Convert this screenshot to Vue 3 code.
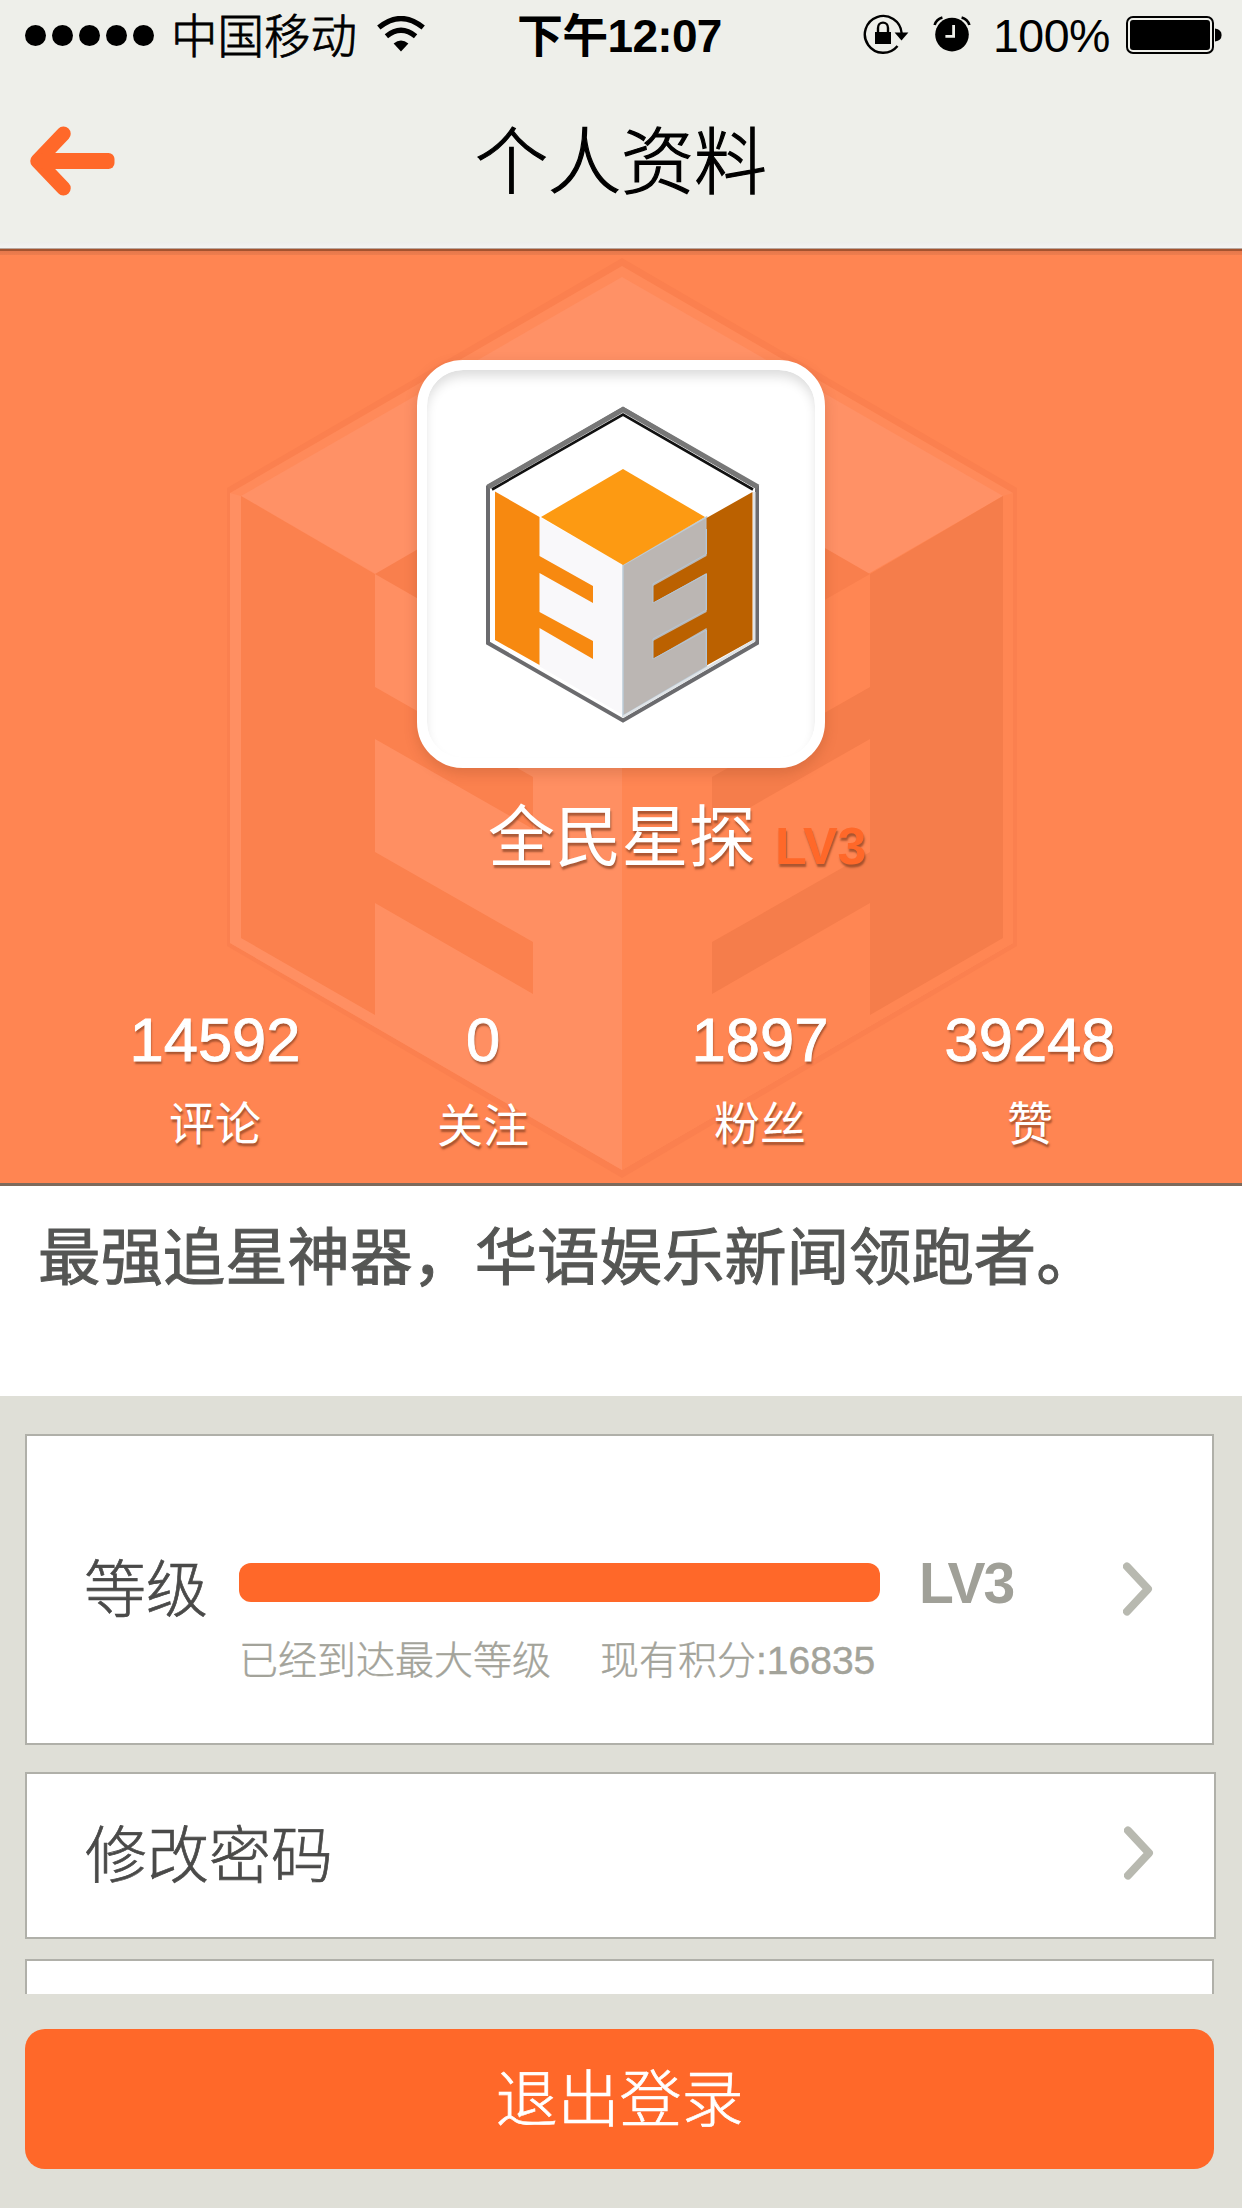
<script setup>
const stats = [
  { value: '14592', label: '评论' },
  { value: '0', label: '关注', low: true },
  { value: '1897', label: '粉丝' },
  { value: '39248', label: '赞' },
]
const level = { name: 'LV3', percent: 100, points: 16835 }
</script>

<template>
  <div class="page">
    <div class="status">
      <div class="dots"><i v-for="n in 5" :key="n"></i></div>
      <span class="carrier">中国移动</span>
      <svg class="wifi" width="48" height="36" viewBox="0 0 48 36">
        <g fill="none" stroke="#000" stroke-width="5.2">
          <path d="M1.8 11.6Q24-6.6 46.2 11.6" />
          <path d="M9.4 20.2Q24 8.2 38.6 20.2" />
        </g>
        <path d="M16.6 27.4Q24 21.6 31.4 27.4L24 35.4Z" />
      </svg>
      <span class="time">下午12:07</span>
      <svg class="lock" width="46" height="40" viewBox="0 0 46 40">
        <path d="M34.5 32A18.4 18.4 0 1 1 38.6 19" fill="none" stroke="#000" stroke-width="2.4" />
        <path d="M31.6 18.6H45.4L38.5 26.4Z" />
        <rect x="12" y="18" width="16" height="12" />
        <path d="M15 18V14a5 5.4 0 0 1 10 0v4" fill="none" stroke="#000" stroke-width="2.4" />
      </svg>
      <svg class="alarm" width="38" height="36" viewBox="0 0 38 36">
        <circle cx="19" cy="18.6" r="16.8" />
        <path d="M1.6 9Q3.4 3 9.4 1.4M28.6 1.4Q34.6 3 36.4 9" fill="none" stroke="#000" stroke-width="2.6" />
        <path d="M20.6 9V20.4H12.4" fill="none" stroke="#eeefea" stroke-width="2.8" />
      </svg>
      <span class="percent">100%</span>
      <svg class="battery" width="96" height="38" viewBox="0 0 96 38">
        <rect x="1" y="1" width="86" height="36" rx="6" fill="none" stroke="#000" stroke-width="2" />
        <rect x="4" y="4" width="80" height="30" rx="3" />
        <path d="M89 12.4Q95.6 13.4 95.6 19T89 25.6Z" />
      </svg>
    </div>

    <header class="nav">
      <svg class="back" width="86" height="70" viewBox="0 0 86 70">
        <path d="M34.5 7.8L8.5 35L34.5 62.2" fill="none" stroke="#ff6829" stroke-width="14.5" stroke-linecap="round" stroke-linejoin="round" />
        <rect x="8" y="27" width="77.5" height="16" rx="6" fill="#ff6829" />
      </svg>
      <h1>个人资料</h1>
    </header>

    <section class="hero">
      <svg class="backdrop" width="1242" height="937" viewBox="0 248 1242 937">
        <path d="M622 258L1017 488V946L622 1178L227 946V488Z" fill="#fb804f" />
        <path d="M622 266L1013 493V943L622 1170L230 943V493Z" fill="#ff8a5a" />
        <path d="M622 277L1003 496L870 574L622 716L375 574L241 496Z" fill="#ff9166" />
        <path d="M230 493L241 496L622 716V1170L230 943Z" fill="#ff8f62" />
        <path d="M1013 493L1003 496L622 716V1170L1013 943Z" fill="#ff8653" />
        <path d="M375 574L622 431L870 574L622 716Z" fill="#f97f4d" />
        <path d="M241 496L375 574V687L533 777V829L375 739V852L533 942V994L375 903V1015L241 938Z" fill="#fb814e" />
        <path d="M1003 496L870 574V687L712 777V829L870 739V852L712 942V994L870 903V1015L1003 938Z" fill="#f57d4b" />
      </svg>
      <div class="content">
        <div class="avatar">
          <svg width="274" height="318" viewBox="485 406 274 318">
            <path d="M622 409L756 487V643L622 720.500L487 643V487Z" fill="#fff" stroke="#6b6b6e" stroke-width="4" />
            <path d="M487 487L622 409.500L757 487" fill="none" stroke="#777" stroke-width="5" />
            <path d="M491 489.500L622 414.500L752 489.500" fill="none" stroke="#111" stroke-width="2.600" />
            <path d="M538 517L622 565V715L538 666Z" fill="#f9f8fa" />
            <path d="M622 565L705.500 517V667L622 716Z" fill="#bbb6b3" stroke="#bccbd8" stroke-width="1.500" />
            <path d="M540 517L622 469L704 517L622 565Z" fill="#fd9a12" />
            <path d="M494 491.500L538.500 517V556L592 586V603L538.500 573V612L592 641V659L538.500 628V665L494 640Z" fill="#f78910" />
            <path d="M751.500 492L705.500 518V556L652 586V603L705.500 573V612L652 641V659L705.500 628V665.500L751.500 640Z" fill="#bb6100" />
            <path d="M705.500 529V554L652 584V603L705.500 574V610L652 639V659L705.500 630V665" fill="none" stroke="#b4c6d6" stroke-width="1" />
            <path d="M753.300 492V640.500L622 716.800" fill="none" stroke="#dfe3e6" stroke-width="2.400" />
          </svg>
        </div>
        <div class="who"><span class="name">全民星探</span><span class="badge">{{ level.name }}</span></div>
        <div class="stats">
          <div v-for="s in stats" :key="s.label" class="stat">
            <div class="value">{{ s.value }}</div>
            <div class="label" :class="{ low: s.low }">{{ s.label }}</div>
          </div>
        </div>
      </div>
    </section>

    <p class="bio">最强追星神器，华语娱乐新闻领跑者。</p>

    <main class="list">
      <div class="card level">
        <span class="title">等级</span>
        <div class="progress">
          <div class="track"><div class="fill" :style="{ width: level.percent + '%' }"></div></div>
          <div class="notes"><span>已经到达最大等级</span><span>现有积分:{{ level.points }}</span></div>
        </div>
        <span class="lv">{{ level.name }}</span>
        <svg class="chevron" width="30" height="54" viewBox="0 0 30 54">
          <path d="M4 4.500L25 27L4 49.500" fill="none" stroke="#b8b9b0" stroke-width="8" stroke-linecap="round" stroke-linejoin="round" />
        </svg>
      </div>
      <div class="card password">
        <span class="title">修改密码</span>
        <svg class="chevron" width="30" height="54" viewBox="0 0 30 54">
          <path d="M4 4.500L25 27L4 49.500" fill="none" stroke="#b8b9b0" stroke-width="8" stroke-linecap="round" stroke-linejoin="round" />
        </svg>
      </div>
      <div class="card partial"></div>
    </main>

    <footer class="footer"><button class="logout">退出登录</button></footer>
  </div>
</template>

<style>
body {
  background: #dfdfd7;
}
</style>

<style scoped>
.page {
  box-sizing: border-box;
  width: 1242px;
  height: 2208px;
  overflow: hidden;
  display: flex;
  flex-direction: column;
  background: #dfdfd7;
  font-family: "Liberation Sans", "Noto Sans CJK SC", sans-serif;
  font-weight: 400;
}
.page svg {
  display: block;
  flex: none;
}
.status {
  height: 70px;
  flex: none;
  display: flex;
  align-items: center;
  background: #eeefea;
  color: #000;
  font-size: 46.500px;
  line-height: 70px;
  white-space: nowrap;
}
.dots {
  display: flex;
  gap: 6px;
  margin-left: 24.500px;
  width: 130px;
}
.dots i {
  width: 21px;
  height: 21px;
  border-radius: 50%;
  background: #000;
  flex: none;
}
.carrier {
  width: 187px;
  margin-left: 16.500px;
  padding-top: 3px;
  font-weight: 300;
  -webkit-text-stroke: 0.800px #000;
}
.wifi {
  margin-left: 19px;
  margin-top: -3px;
}
.time {
  width: 215px;
  margin-left: 92px;
  padding-top: 2px;
  font-size: 46px;
  font-weight: 700;
  letter-spacing: -0.700px;
}
.lock {
  margin-left: 131px;
  margin-top: -3px;
}
.alarm {
  margin-left: 24px;
  margin-top: -3px;
}
.percent {
  width: 121px;
  margin-left: 22px;
  padding-top: 1px;
  letter-spacing: -0.500px;
}
.battery {
  margin-left: 12px;
  margin-top: -1px;
}
.nav {
  height: 178px;
  flex: none;
  box-sizing: border-box;
  display: grid;
  grid-template-columns: 116px 1fr 116px;
  align-items: center;
  background: linear-gradient(#eeefea 172px, #ededeb 172px, #f3f3f2 178px);
}
.back {
  margin-left: 29px;
  margin-top: 4px;
}
.nav h1 {
  margin: 0;
  padding-top: 7px;
  text-align: center;
  font-size: 73px;
  line-height: 80px;
  font-weight: 300;
  color: #000;
  -webkit-text-stroke: 1.200px #000;
}
.hero {
  height: 938px;
  flex: none;
  box-sizing: border-box;
  position: relative;
  background: #ff8552;
  border-bottom: 3px solid #7d6a5c;
}
.hero::before {
  content: "";
  position: absolute;
  inset: 0 0 auto;
  height: 7px;
  z-index: 1;
  background: linear-gradient(#b9a79e 1px, #a4532f 1px, #a4532f 3px, #e5784c 3px, #ee7d4e 7px);
}
.backdrop {
  position: absolute;
  left: 0;
  top: 0;
}
.content {
  position: relative;
  display: flex;
  flex-direction: column;
  padding-top: 112px;
  color: #fff;
}
.avatar {
  width: 388px;
  height: 388px;
  margin-left: 417px;
  border: 10px solid #fff;
  border-radius: 46px;
  background: #fff;
  display: flex;
  align-items: center;
  justify-content: center;
  box-shadow: inset 0 8px 12px -2px rgba(0, 0, 0, 0.14), 0 5px 14px rgba(90, 40, 10, 0.18);
}
.avatar svg {
  margin-top: 2px;
  margin-left: 3px;
}
.who {
  display: flex;
  margin-top: 24px;
  margin-left: 488px;
  height: 92px;
  line-height: 92px;
  text-shadow: 1px 3px 2px rgba(100, 45, 20, 0.55);
}
.name {
  width: 287px;
  font-size: 66.800px;
}
.badge {
  padding-top: 8px;
  font-size: 52px;
  font-weight: 700;
  letter-spacing: 0;
  color: #ff6829;
}
.stats {
  display: grid;
  grid-template-columns: 268px 268px 286px 254px;
  margin-left: 81px;
  margin-top: 121px;
  text-align: center;
  text-shadow: 1px 3px 2px rgba(100, 45, 20, 0.55);
}
.value {
  font-size: 61.500px;
  line-height: 70px;
  -webkit-text-stroke: 0.900px #fff;
}
.label {
  margin-top: 19px;
  font-size: 46px;
  line-height: 60px;
}
.label.low {
  margin-top: 21px;
}
.bio {
  height: 210px;
  flex: none;
  box-sizing: border-box;
  margin: 0;
  padding: 33px 0 0 38px;
  background: #fff;
  color: #555654;
  font-size: 62.400px;
  line-height: 80px;
  font-weight: 400;
  -webkit-text-stroke: 1px #555654;
  white-space: nowrap;
}
.list {
  height: 598px;
  flex: none;
  box-sizing: border-box;
  overflow: hidden;
  padding: 38px 0 0 25px;
}
.card {
  box-sizing: border-box;
  width: 1189px;
  border: 2px solid #b0b0a9;
  background: #fff;
  display: flex;
  white-space: nowrap;
}
.title {
  font-size: 62px;
  line-height: 80px;
  font-weight: 300;
  color: #4a4a49;
  -webkit-text-stroke: 0.700px #4a4a49;
}
.level {
  height: 311px;
  padding-left: 57px;
}
.level .title {
  width: 155px;
  padding-top: 115px;
}
.progress {
  width: 641px;
  padding-top: 127px;
}
.track {
  height: 39px;
}
.fill {
  height: 39px;
  border-radius: 12px;
  background: #ff6829;
}
.notes {
  display: flex;
  gap: 49px;
  padding-top: 34px;
  font-size: 39px;
  line-height: 50px;
  font-weight: 300;
  color: #a3a39a;
  -webkit-text-stroke: 0.400px #a3a39a;
}
.lv {
  width: 144px;
  margin-left: 39px;
  padding-top: 107px;
  font-size: 57px;
  line-height: 80px;
  font-weight: 700;
  letter-spacing: -2px;
  color: #a0a098;
}
.level .chevron {
  margin-left: 60px;
  margin-top: 126px;
}
.password {
  width: 1191px;
  height: 167px;
  margin-top: 27px;
  padding: 0 60px 0 58px;
  justify-content: space-between;
}
.password .title {
  padding-top: 43px;
}
.password .chevron {
  margin-top: 52px;
}
.partial {
  height: 60px;
  margin-top: 20px;
}
.footer {
  padding: 35px 0 0 25px;
}
.logout {
  display: block;
  width: 1189px;
  height: 140px;
  padding: 0 0 9px;
  border: 0;
  border-radius: 20px;
  background: #ff6829;
  color: #fff;
  font-family: inherit;
  font-size: 62px;
  font-weight: 300;
  -webkit-text-stroke: 0.700px #fff;
}
</style>
